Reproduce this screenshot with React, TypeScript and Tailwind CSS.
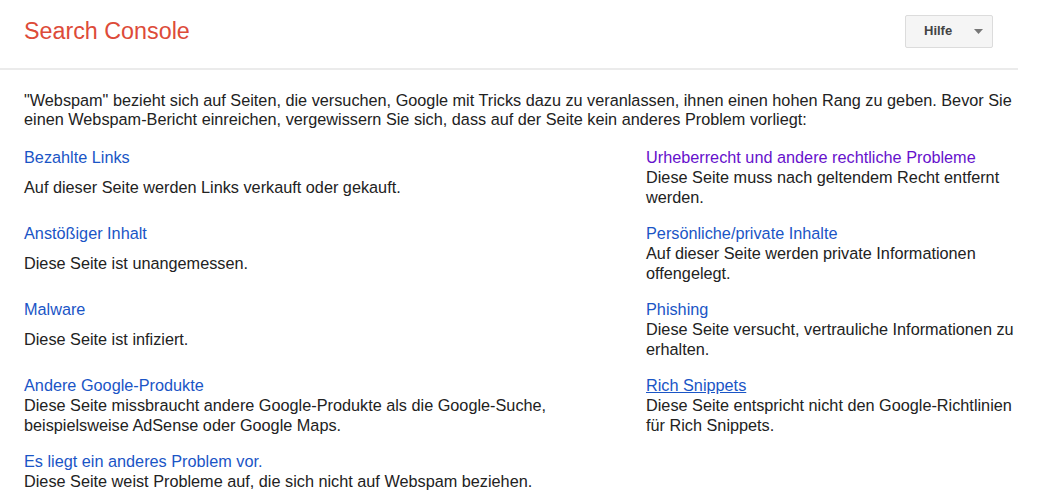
const items: { title: string; desc: string; visited?: boolean; underline?: boolean }[][] = [
  [
    { title: "Bezahlte Links", desc: "Auf dieser Seite werden Links verkauft oder gekauft." },
    {
      title: "Urheberrecht und andere rechtliche Probleme",
      desc: "Diese Seite muss nach geltendem Recht entfernt werden.",
      visited: true,
    },
  ],
  [
    { title: "Anstößiger Inhalt", desc: "Diese Seite ist unangemessen." },
    { title: "Persönliche/private Inhalte", desc: "Auf dieser Seite werden private Informationen offengelegt." },
  ],
  [
    { title: "Malware", desc: "Diese Seite ist infiziert." },
    { title: "Phishing", desc: "Diese Seite versucht, vertrauliche Informationen zu erhalten." },
  ],
  [
    {
      title: "Andere Google-Produkte",
      desc: "Diese Seite missbraucht andere Google-Produkte als die Google-Suche, beispielsweise AdSense oder Google Maps.",
    },
    {
      title: "Rich Snippets",
      desc: "Diese Seite entspricht nicht den Google-Richtlinien für Rich Snippets.",
      underline: true,
    },
  ],
  [{ title: "Es liegt ein anderes Problem vor.", desc: "Diese Seite weist Probleme auf, die sich nicht auf Webspam beziehen." }],
];

export default function App() {
  return (
    <div className="w-[1044px] h-[493px] overflow-hidden bg-white text-[#222] font-['Liberation_Sans',Arial,sans-serif]">
      {/* Header */}
      <div className="w-[1018px] h-[70px] border-b-2 border-[#ebebeb] flex items-center justify-between pl-6 pr-[25px]">
        <div className="text-[23.3px] leading-none text-[#dd4b39] -mt-[4px]">Search Console</div>
        <button className="w-[88px] h-[33px] -mt-[6px] rounded-[2px] border border-[#dcdcdc] bg-[#f5f5f5] flex items-center pl-[18px] pr-[9px] text-[13px] font-bold text-[#444]">
          <span>Hilfe</span>
          <svg className="ml-auto" width="9" height="5" viewBox="0 0 9 5">
            <path d="M0 0h9L4.5 5z" fill="#777" />
          </svg>
        </button>
      </div>

      {/* Content */}
      <div className="w-[1018px] pl-6 pt-[21px] text-[16.25px] leading-[19px]">
        <p className="mb-[18px]">
          "Webspam" bezieht sich auf Seiten, die versuchen, Google mit Tricks dazu zu veranlassen, ihnen einen hohen Rang zu
          geben. Bevor Sie einen Webspam-Bericht einreichen, vergewissern Sie sich, dass auf der Seite kein anderes Problem
          vorliegt:
        </p>
        <div className="grid grid-cols-[622px_372px] gap-y-4 leading-[20px]">
          {items.map((row, i) =>
            [0, 1].map((j) => {
              const it = row[j];
              if (!it) return <div key={`${i}-${j}`} />;
              return (
                <div key={`${i}-${j}`} className="flex flex-col">
                  <a
                    className={`${it.visited ? "text-[#6611cc]" : "text-[#1a55c6]"} ${
                      it.underline ? "underline" : ""
                    } self-start cursor-pointer`}
                  >
                    {it.title}
                  </a>
                  <div className="flex-1 flex items-center pr-1">
                    <span>{it.desc}</span>
                  </div>
                </div>
              );
            })
          )}
        </div>
      </div>
    </div>
  );
}
